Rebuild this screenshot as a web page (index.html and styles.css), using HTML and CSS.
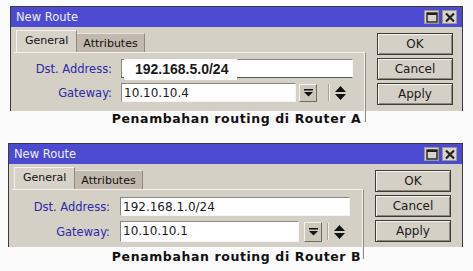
FILE: index.html
```html
<!DOCTYPE html>
<html lang="id">
<head>
    <meta charset="UTF-8">
    <title>Penambahan routing</title>
    <link rel="stylesheet" href="styles.css">
</head>
<body>
    <!-- Router A -->
    <div class="window win-a">
        <div class="titlebar">
            <span class="title">New Route</span>
            <div class="title-icons">
                <span class="ticon"><svg width="12" height="11" viewBox="0 0 12 11"><rect x="1" y="1" width="10" height="9" fill="none" stroke="#222" stroke-width="1.4"/><rect x="1" y="1" width="10" height="2" fill="#222"/></svg></span>
                <span class="ticon"><svg width="12" height="11" viewBox="0 0 12 11"><path d="M2 1.5 L10 9.5 M10 1.5 L2 9.5" stroke="#222" stroke-width="2.2"/></svg></span>
            </div>
        </div>
        <div class="window-body">
            <div class="main">
                <div class="tabs">
                    <div class="tab active">General</div>
                    <div class="tab">Attributes</div>
                </div>
                <div class="panel">
                    <div class="row">
                        <label class="label">Dst. Address:</label>
                        <div class="input input-dst edited"><span class="edit-text">192.168.5.0/24</span></div>
                    </div>
                    <div class="row">
                        <label class="label">Gateway:</label>
                        <div class="input input-gw">10.10.10.4</div>
                        <span class="drop-btn"><svg width="9" height="8" viewBox="0 0 9 8"><rect x="0" y="0" width="9" height="1.5" fill="#111"/><path d="M0 3 L9 3 L4.5 7.5 Z" fill="#111"/></svg></span>
                        <span class="sep"></span>
                        <span class="updown"><svg width="11" height="14" viewBox="0 0 11 14"><path d="M5.5 0 L11 6 L0 6 Z M0 8 L11 8 L5.5 14 Z" fill="#111"/></svg></span>
                    </div>
                </div>
            </div>
            <div class="buttons">
                <div class="btn">OK</div>
                <div class="btn">Cancel</div>
                <div class="btn">Apply</div>
            </div>
        </div>
    </div>
    <div class="caption">Penambahan routing di Router A</div>

    <!-- Router B -->
    <div class="window win-b">
        <div class="titlebar">
            <span class="title">New Route</span>
            <div class="title-icons">
                <span class="ticon"><svg width="12" height="11" viewBox="0 0 12 11"><rect x="1" y="1" width="10" height="9" fill="none" stroke="#222" stroke-width="1.4"/><rect x="1" y="1" width="10" height="2" fill="#222"/></svg></span>
                <span class="ticon"><svg width="12" height="11" viewBox="0 0 12 11"><path d="M2 1.5 L10 9.5 M10 1.5 L2 9.5" stroke="#222" stroke-width="2.2"/></svg></span>
            </div>
        </div>
        <div class="window-body">
            <div class="main">
                <div class="tabs">
                    <div class="tab active">General</div>
                    <div class="tab">Attributes</div>
                </div>
                <div class="panel">
                    <div class="row">
                        <label class="label">Dst. Address:</label>
                        <div class="input input-dst">192.168.1.0/24</div>
                    </div>
                    <div class="row">
                        <label class="label">Gateway:</label>
                        <div class="input input-gw">10.10.10.1</div>
                        <span class="drop-btn"><svg width="9" height="8" viewBox="0 0 9 8"><rect x="0" y="0" width="9" height="1.5" fill="#111"/><path d="M0 3 L9 3 L4.5 7.5 Z" fill="#111"/></svg></span>
                        <span class="sep"></span>
                        <span class="updown"><svg width="11" height="14" viewBox="0 0 11 14"><path d="M5.5 0 L11 6 L0 6 Z M0 8 L11 8 L5.5 14 Z" fill="#111"/></svg></span>
                    </div>
                </div>
            </div>
            <div class="buttons">
                <div class="btn">OK</div>
                <div class="btn">Cancel</div>
                <div class="btn">Apply</div>
            </div>
        </div>
    </div>
    <div class="caption caption-b">Penambahan routing di Router B</div>
</body>
</html>
```

FILE: styles.css
```css
body {
    margin: 0;
    background: #fbfbfb;
    font-family: "DejaVu Sans", Tahoma, sans-serif;
    font-size: 11px;
    color: #111;
    overflow: hidden;
}
.window {
    width: 451px;
    background: #d5d0c6;
    border: 1px solid #3a3a3a;
    border-bottom: none;
}
.win-a {
    margin: 6px 0 0 10px;
    height: 104px;
}
.win-b {
    margin: 0 0 0 8px;
    width: 453px;
    height: 103px;
}
.titlebar {
    height: 20px;
    background: #4d4ad2;
    color: #eeeeff;
    display: flex;
    align-items: center;
    justify-content: space-between;
    padding: 0 5px 0 5px;
}
.title {
    font-size: 11.5px;
}
.title-icons {
    display: flex;
    gap: 3px;
}
.ticon {
    width: 15px;
    height: 14px;
    background: #d8d4cc;
    display: flex;
    align-items: center;
    justify-content: center;
    border: 1px solid #9c988f;
    box-sizing: border-box;
}
.window-body {
    display: flex;
}
.main {
    margin-left: 3px;
    width: 352px;
}
.tabs {
    display: flex;
    align-items: flex-end;
    height: 25px;
    padding-left: 2px;
}
.tab {
    height: 19px;
    line-height: 19px;
    padding: 0 6px;
    background: #c1b9ad;
    border-top: 1px solid #e8e4dc;
    border-right: 1px solid #8f897f;
    box-sizing: border-box;
}
.tab.active {
    height: 22px;
    line-height: 20px;
    padding: 0 8px;
    background: #d8d3c9;
    border-left: 1px solid #f4f2ee;
    border-top: 1px solid #f4f2ee;
}
.panel {
    height: 70px;
    border-top: 1px solid #f4f2ee;
    border-right: 1px solid #8f897f;
    box-shadow: inset -1px 0 0 #f4f2ee;
    padding-top: 6px;
    box-sizing: border-box;
}
.row {
    display: flex;
    align-items: center;
    height: 19px;
    margin-bottom: 5px;
}
.label {
    width: 98px;
    text-align: right;
    color: #2a2aa8;
    font-size: 11.5px;
}
.input {
    margin-left: 9px;
    height: 19px;
    line-height: 18px;
    background: #fff;
    border: 1px solid;
    border-color: #8a8680 #f6f6f6 #f6f6f6 #8a8680;
    box-sizing: border-box;
    padding-left: 2px;
    font-size: 12px;
    color: #1a1a1a;
}
.input-dst {
    width: 232px;
}
.input-gw {
    width: 175px;
}
.win-b .input-dst {
    width: 230px;
    margin-left: 10px;
}
.win-b .input-gw {
    width: 179px;
    margin-left: 10px;
    height: 21px;
}
.win-b .row {
    height: 21px;
    margin-bottom: 4px;
}
.edited {
    border-bottom-color: #555;
}
.edit-text {
    display: inline-block;
    background: #fff;
    font-family: "Liberation Sans", Arial, sans-serif;
    font-weight: bold;
    font-size: 14px;
    padding: 0 9px 0 11px;
    height: 21px;
    line-height: 20px;
    width: 93px;
    margin-top: -1px;
}
.drop-btn {
    margin-left: 3px;
    width: 18px;
    height: 18px;
    background: #cdc7bc;
    border: 1px solid;
    border-color: #f4f2ee #6f6a62 #6f6a62 #f4f2ee;
    box-sizing: border-box;
    display: flex;
    align-items: center;
    justify-content: center;
}
.win-b .drop-btn {
    margin-left: 5px;
    height: 20px;
}
.sep {
    width: 1px;
    height: 17px;
    margin-left: 11px;
    background: #f2efe9;
    border-left: 1px solid #a8a298;
}
.win-b .sep {
    margin-left: 5px;
}
.updown {
    margin-left: 5px;
    display: flex;
}
.buttons {
    margin-left: 11px;
    padding-top: 6px;
    display: flex;
    flex-direction: column;
    gap: 3px;
}
.btn {
    width: 76px;
    height: 22px;
    box-sizing: border-box;
    border: 1px solid #3e3b36;
    box-shadow: inset 1px 1px 0 #f6f4f0, inset -1px -1px 0 #8d887f;
    text-align: center;
    line-height: 20px;
    font-size: 12px;
    color: #1a1a1a;
}
.caption {
    font-weight: bold;
    font-size: 12.5px;
    letter-spacing: 0.6px;
    text-align: center;
    margin: 1px 0 0 0;
    height: 31px;
    line-height: 14px;
    color: #111;
}
.caption-b {
    margin-top: 3px;
}
```
